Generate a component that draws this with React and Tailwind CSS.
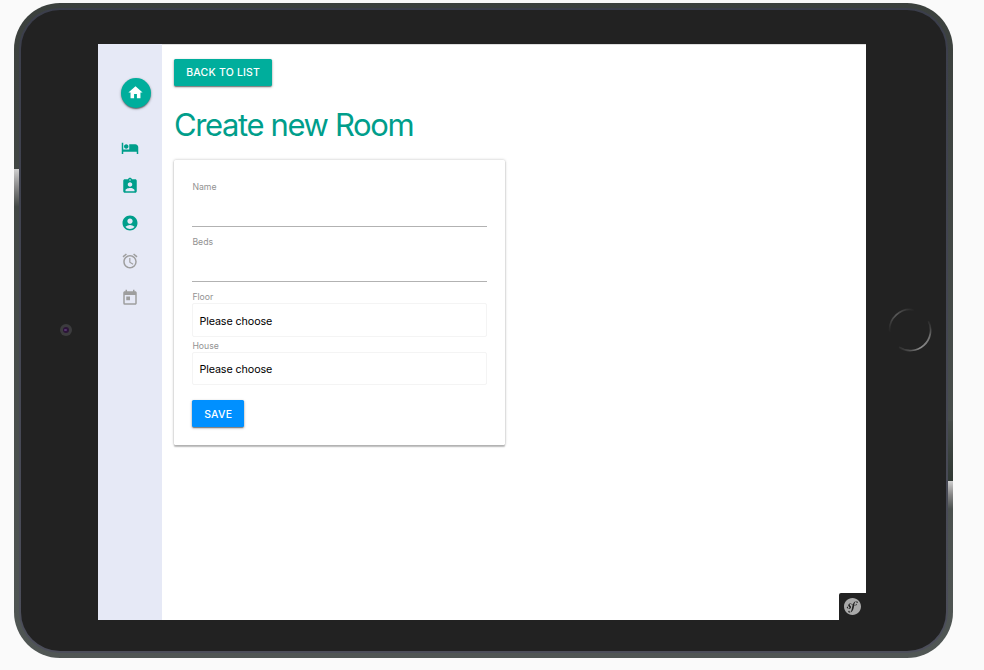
import React from "react";
import {
  MdHome,
  MdHotel,
  MdAssignmentInd,
  MdAccountCircle,
  MdAccessAlarm,
  MdToday,
} from "react-icons/md";
import { SiSymfony } from "react-icons/si";

const raised =
  "shadow-[0_1px_1.5px_rgba(0,0,0,0.26),0_2px_1px_-1px_rgba(0,0,0,0.22),0_1px_3px_rgba(0,0,0,0.28)]";

function Sidebar() {
  return (
    <nav className="flex w-16 flex-col items-center bg-[#e6e9f6] pt-[34px]">
      <a
        className={`ml-[11px] flex h-[30px] w-[30px] items-center justify-center rounded-full bg-[#00ae9c] text-white ${raised}`}
      >
        <MdHome size={17} />
      </a>
      <div className="mt-[31px] flex flex-col items-center text-[#009e8b]">
        <MdHotel size={18} />
        <MdAssignmentInd size={18} className="mt-5" />
        <MdAccountCircle size={18} className="mt-[19px]" />
        <MdAccessAlarm size={18} className="mt-5 text-[#9e9e9e]" />
        <MdToday size={18} className="mt-[19px] text-[#9e9e9e]" />
      </div>
    </nav>
  );
}

function TextField({ label }) {
  return (
    <div className="h-[55px]">
      <label className="block h-[10px] text-[8.7px] leading-[10px] text-[#929292]">{label}</label>
      <div className="h-[35px] border-b border-[#b2b2b2]" />
    </div>
  );
}

function SelectField({ label, height }) {
  return (
    <div>
      <label className="block h-[11px] text-[8.7px] leading-[10px] text-[#929292]">{label}</label>
      <div
        className={`flex items-center rounded-[2px] border border-[#f4f4f4] pl-[6px] text-[10.75px] leading-4 tracking-[-0.1px] text-black ${height}`}
      >
        Please choose
      </div>
    </div>
  );
}

function RoomPage() {
  return (
    <main className="flex-1 border-t border-[#dedede] bg-white pl-[12.4px] pt-[14px]">
      <button
        className={`flex h-[27px] w-[97.6px] items-center justify-center rounded-[1.5px] bg-[#00ae9c] pt-px text-[10.5px] font-medium tracking-[0.2px] text-white ${raised}`}
      >
        BACK TO LIST
      </button>
      <h1 className="ml-[-0.4px] mt-[18px] h-[42px] whitespace-nowrap text-[31px] leading-[41px] tracking-[-1.38px] text-[#009e8b]">
        Create new Room
      </h1>
      <section className="mt-[14px] h-[285.5px] w-[330.4px] rounded-[1.5px] bg-white pl-[18px] pr-[17.8px] pt-[22px] shadow-[0_1.5px_1.5px_rgba(0,0,0,0.24),0_0_3px_rgba(0,0,0,0.25)]">
        <TextField label="Name" />
        <TextField label="Beds" />
        <SelectField label="Floor" height="h-[34px] pt-[4px]" />
        <div className="h-1" />
        <SelectField label="House" height="h-[33px] pt-[3px]" />
        <button
          className={`mt-[15.5px] flex h-[27px] w-[51.6px] items-center justify-center rounded-[1.5px] bg-[#0090ff] pt-[1.5px] text-[10.5px] font-medium tracking-[0.2px] text-white ${raised}`}
        >
          SAVE
        </button>
      </section>
    </main>
  );
}

function HomeButton() {
  return (
    <svg width="44" height="44" viewBox="0 0 44 44" fill="none" strokeWidth="1.7">
      <defs>
        <linearGradient id="arcTop" x1="1" y1="24" x2="26" y2="1" gradientUnits="userSpaceOnUse">
          <stop offset="0" stopColor="#222" />
          <stop offset="0.5" stopColor="#5a5a5a" />
          <stop offset="1" stopColor="#222" />
        </linearGradient>
        <linearGradient id="arcBottom" x1="11" y1="42" x2="42" y2="13" gradientUnits="userSpaceOnUse">
          <stop offset="0" stopColor="#222" />
          <stop offset="0.4" stopColor="#8c8c8c" />
          <stop offset="0.75" stopColor="#707070" />
          <stop offset="1" stopColor="#222" />
        </linearGradient>
      </defs>
      <path d="M1.6 24 A20.5 20.5 0 0 1 26 1.9" stroke="url(#arcTop)" />
      <path d="M40.5 13 A20.5 20.5 0 0 1 11 39.3" stroke="url(#arcBottom)" />
    </svg>
  );
}

export default function App() {
  return (
    <div className="h-[670px] w-[984px] overflow-hidden bg-[#fafafa] pl-[14px] pt-[2.5px] font-['Inter','Liberation_Sans',sans-serif]">
      <div className="relative h-[655.5px] w-[939px] rounded-[46px] bg-linear-to-b from-[#3b403d] to-[#505654] p-[5px]">
        <div className="absolute left-0 top-[166.5px] h-[38px] w-[5px] bg-linear-to-b from-[#d0d0d0] via-[#858585] to-[#414643]" />
        <div className="absolute right-0 top-[418px] h-[60px] w-[5px] bg-linear-to-b from-[#464c49] to-[#303833]" />
        <div className="absolute right-0 top-[478px] h-[28px] w-[5px] bg-linear-to-b from-[#d0d0d0] via-[#858585] to-[#4b514f]" />
        <div className="h-full rounded-[41px] bg-linear-to-b from-[#3b3e4b] to-[#4c4e5a] p-[2px]">
          <div className="flex h-full items-center rounded-[39px] bg-[#222]">
            <div className="flex w-[77px] justify-center pl-[12px]">
              <div className="flex h-3 w-3 items-center justify-center rounded-full bg-[#3c3c3e]">
                <div className="flex h-[6px] w-[6px] items-center justify-center rounded-full bg-[#2b1538]">
                  <div className="h-[2px] w-[3px] rounded-full bg-[#573470]" />
                </div>
              </div>
            </div>
            <div className="relative mt-[3px] flex h-[576px] w-[768px] bg-white">
              <Sidebar />
              <RoomPage />
              <div className="absolute bottom-0 right-0 flex h-[27px] w-[27px] items-center justify-center rounded-tl-[2px] bg-[#222] text-[#aaa]">
                <SiSymfony size={17} />
              </div>
            </div>
            <div className="flex flex-1 justify-center pl-[7px]">
              <HomeButton />
            </div>
          </div>
        </div>
      </div>
    </div>
  );
}
